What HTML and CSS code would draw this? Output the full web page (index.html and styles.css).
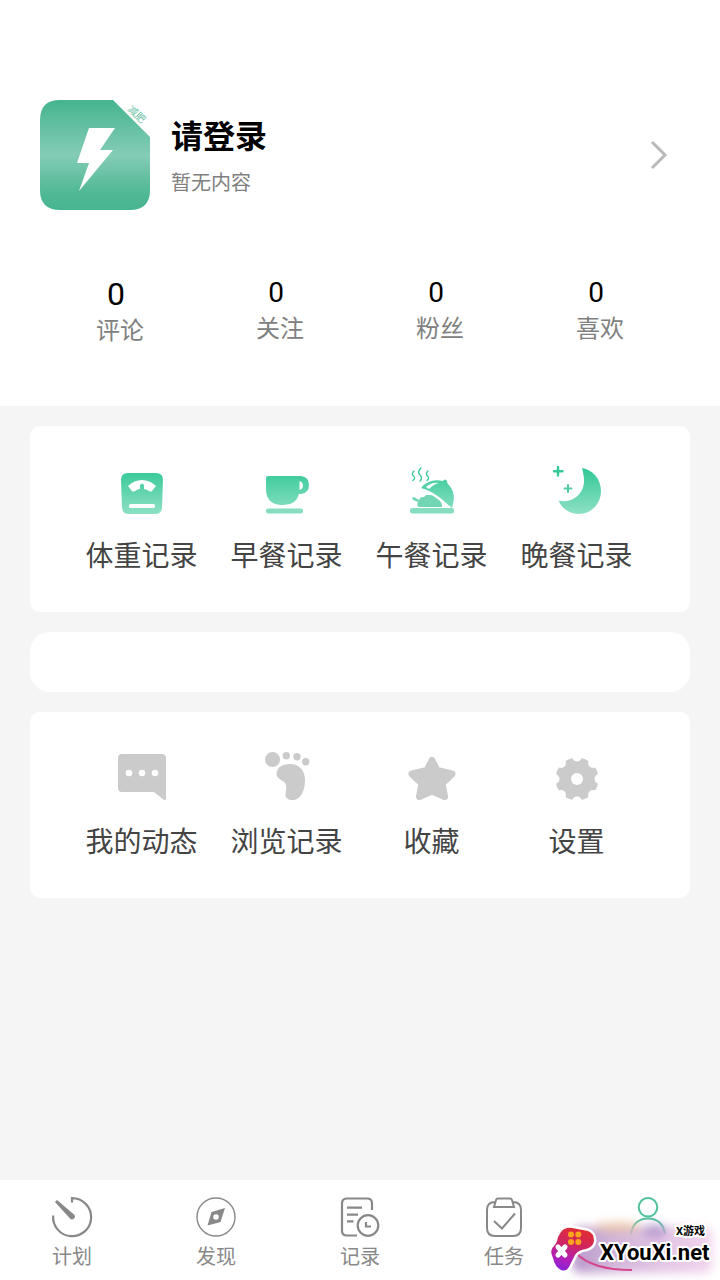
FILE: index.html
```html
<!DOCTYPE html>
<html lang="zh-CN">
<head>
<meta charset="utf-8">
<meta name="viewport" content="width=device-width, initial-scale=1">
<title>我的</title>
<link rel="stylesheet" href="styles.css">
</head>
<body>
<main class="content">
  <header class="head">
    <a class="profile" href="#login">
      <svg class="avatar" viewBox="0 0 110 110" aria-hidden="true">
        <defs>
          <linearGradient id="av" x1="0" y1="0" x2="0" y2="1">
            <stop offset="0" stop-color="#45b48f"/><stop offset=".5" stop-color="#84ccb6"/><stop offset=".85" stop-color="#4fb894"/><stop offset="1" stop-color="#48b590"/>
          </linearGradient>
        </defs>
        <path fill="url(#av)" d="M20 0H73L110 37V90Q110 110 90 110H20Q0 110 0 90V20Q0 0 20 0Z"/>
        <path fill="#fff" d="M49 28H75L60 50H73L39 91L49 63H37Z"/>
        <text class="avatar-tag" transform="translate(87 10) rotate(43)">减肥</text>
      </svg>
      <span class="who"><span class="name">请登录</span><span class="bio">暂无内容</span></span>
      <svg class="chevron" viewBox="0 0 20 30" aria-hidden="true"><path d="M3 2L16 15L3 28"/></svg>
    </a>
    <div class="stats">
      <a class="stat stat-main" href="#comments"><span class="num">0</span><span class="cap">评论</span></a>
      <a class="stat" href="#following"><span class="num">0</span><span class="cap">关注</span></a>
      <a class="stat" href="#fans"><span class="num">0</span><span class="cap">粉丝</span></a>
      <a class="stat" href="#likes"><span class="num">0</span><span class="cap">喜欢</span></a>
    </div>
  </header>

  <section class="card green">
    <a class="item" href="#weight">
      <svg class="icon" viewBox="0 0 60 60" aria-hidden="true">
        <defs>
          <linearGradient id="g" gradientUnits="userSpaceOnUse" x1="0" y1="8" x2="0" y2="52">
            <stop offset="0" stop-color="#35c997"/><stop offset="1" stop-color="#8ee0c5"/>
          </linearGradient>
        </defs>
        <path fill="url(#g)" d="M16 11H44Q51 11 51 18L50 45Q50 52 43 52H17Q10 52 10 45L9 18Q9 11 16 11Z"/>
        <path fill="#fff" d="M16 24Q22 18 30 18T44 24L40 29Q39 30 37 29Q34 27 32 27V23Q30 20 28 23V27Q26 27 23 29Q21 30 20 29Z"/>
        <rect fill="#fff" x="17" y="42" width="26" height="4" rx="1.5"/>
      </svg>
      <span>体重记录</span>
    </a>
    <a class="item" href="#breakfast">
      <svg class="icon" viewBox="0 0 60 60" aria-hidden="true">
        <path fill="url(#g)" fill-rule="evenodd" d="M11 14H44Q52 15 52 23T44 32H42Q39 43 27 43H24Q9 42 9 27V16Q9 14 11 14ZM42.500 19V28Q46 27 46 23.500T42.500 19Z"/>
        <rect fill="#86ddc1" x="9" y="46.500" width="37" height="5" rx="2"/>
      </svg>
      <span>早餐记录</span>
    </a>
    <a class="item" href="#lunch">
      <svg class="icon" viewBox="0 0 60 60" aria-hidden="true">
        <g fill="none" stroke="#35c997" stroke-width="1.300" stroke-linecap="round">
          <path d="M12 9Q9 12 11.500 14T11 18.500M19 6Q15 10 18 13T18 19M26 9Q23 12 25.500 14T25 18.500"/>
        </g>
        <path fill="url(#g)" fill-rule="evenodd" d="M19 26Q27 16 41 19Q43 16 45 19Q45 21 46 22Q55 31 50 46Q46 43 43 40Q31 29 19 26ZM24 25L27 27Q32 22 37 21Q30 20 24 25Z"/>
        <path fill="#72d6b5" d="M10 36L12 35L17 38L19 35Q22 36 24 33Q29 32 33 35Q35 37 37 38Q40 40 40 45H17Q14 43 16 40L11 38Z"/>
        <rect fill="#86ddc1" x="8" y="46" width="44" height="5.500" rx="2.500"/>
      </svg>
      <span>午餐记录</span>
    </a>
    <a class="item" href="#dinner">
      <svg class="icon" viewBox="0 0 60 60" aria-hidden="true">
        <path fill="url(#g)" d="M35 6C46 8 54 17 54 29C54 42 44 52 32 52C23 52 15 47 11.500 38.500C22 42 37 34 37 19C37 14 36 10 35 6Z"/>
        <path fill="none" stroke="#35c997" stroke-width="2.400" stroke-linecap="round" d="M11 5V13.500M7 9.200H15.500"/>
        <path fill="none" stroke="#50cda3" stroke-width="2" stroke-linecap="round" d="M21 23V30M17.500 26.500H24.500"/>
      </svg>
      <span>晚餐记录</span>
    </a>
  </section>

  <div class="strip"></div>

  <section class="card gray">
    <a class="item" href="#posts">
      <svg class="icon" viewBox="0 0 60 60" aria-hidden="true">
        <path d="M10 6H50Q54 6 54 10V51Q54 52 52 52L42 44H10Q6 44 6 40V10Q6 6 10 6Z"/>
        <g fill="#fff"><circle cx="17" cy="25" r="3.300"/><circle cx="30" cy="25" r="3.300"/><circle cx="43" cy="25" r="3.300"/></g>
      </svg>
      <span>我的动态</span>
    </a>
    <a class="item" href="#history">
      <svg class="icon" viewBox="0 0 60 60" aria-hidden="true">
        <circle cx="15.500" cy="11.500" r="7.500"/><circle cx="29.300" cy="7.700" r="3.700"/><circle cx="40" cy="8.700" r="3.700"/><circle cx="48.700" cy="13.700" r="3.700"/>
        <path d="M19.500 25C20 19 26 16 33 16C42 16 48 22 48 32C48 44 43 52 36 52C31 52 28 50 28.500 46C29 42 30 38 28 35C26 32 19 31 19.500 25Z"/>
      </svg>
      <span>浏览记录</span>
    </a>
    <a class="item" href="#favorites">
      <svg class="icon" viewBox="0 0 60 60" aria-hidden="true">
        <path stroke="#cbcbcb" stroke-width="7" stroke-linejoin="round" d="M30 12.500L35 22.500L50 26L40 35.500L42.500 48.500L30 43L17.500 48.500L20 35.500L10 26L25 22.500Z"/>
      </svg>
      <span>收藏</span>
    </a>
    <a class="item" href="#settings">
      <svg class="icon" viewBox="0 0 60 60" aria-hidden="true">
        <circle cx="30" cy="31" r="21.500"/>
        <g fill="#fff">
          <circle cx="30" cy="31" r="6"/>
          <circle cx="30" cy="8.500" r="5"/><circle cx="46" cy="15" r="5"/><circle cx="52.500" cy="31" r="5"/><circle cx="46" cy="47" r="5"/>
          <circle cx="30" cy="53.500" r="5"/><circle cx="14" cy="47" r="5"/><circle cx="7.500" cy="31" r="5"/><circle cx="14" cy="15" r="5"/>
        </g>
      </svg>
      <span>设置</span>
    </a>
  </section>
</main>

<nav class="tabs">
  <a class="tab" href="#plan">
    <svg viewBox="0 0 44 44" aria-hidden="true"><path stroke-width="2.200" d="M22 7.500V3.200A19 19 0 1 1 3.200 20.500"/><path class="solid" d="M5 7L7 5L24 19.500A2.800 2.800 0 0 1 20 23.500Z"/></svg>
    <span>计划</span>
  </a>
  <a class="tab" href="#discover">
    <svg viewBox="0 0 44 44" aria-hidden="true"><circle cx="22" cy="22" r="19" stroke-width="1.400"/><path class="solid" fill-rule="evenodd" d="M31 13L26.500 27L13.500 30.500L17.500 17ZM22 19.200A2.800 2.800 0 1 0 22 24.800A2.800 2.800 0 1 0 22 19.200Z"/></svg>
    <span>发现</span>
  </a>
  <a class="tab" href="#record">
    <svg viewBox="0 0 44 44" aria-hidden="true"><path stroke-width="2.200" d="M34 15V8Q34 3.500 29 3.500H9Q4 3.500 4 8.500V36Q4 40.500 9 40.500H19M9 12.700H24M9 19.700H20M9 26.300H15.500M28 27V31.500H33"/><circle cx="30" cy="30.500" r="10.300" stroke-width="2.200"/></svg>
    <span>记录</span>
  </a>
  <a class="tab" href="#tasks">
    <svg viewBox="0 0 44 44" aria-hidden="true"><path stroke-width="2" d="M13 7Q5 7 5 15V33Q5 41 13 41H31Q39 41 39 33V15Q39 7 31 7M12 12L14 5Q14.500 3.500 16 3.500H28Q29.500 3.500 30 5L32 12ZM12 26L20 33.500L33 18.500"/></svg>
    <span>任务</span>
  </a>
  <a class="tab active" href="#me" aria-label="我的">
    <svg viewBox="0 0 44 44" aria-hidden="true"><circle cx="22" cy="12.300" r="9.300" stroke-width="2"/><path stroke-width="2" d="M5 39C6 29 13 23.500 22 23.500S38 29 39 39"/></svg>
  </a>
  <svg class="mark" viewBox="0 0 180 70" role="img" aria-label="X游戏 XYouXi.net">
    <defs>
      <filter id="soft" x="-20%" y="-40%" width="140%" height="180%"><feGaussianBlur stdDeviation="5"/></filter>
      <linearGradient id="haze" x1="0" y1="0" x2="1" y2="0">
        <stop offset="0" stop-color="#a77fc0"/><stop offset=".3" stop-color="#c6a2cf"/><stop offset=".6" stop-color="#d9b4dc"/><stop offset="1" stop-color="#efc9ea"/>
      </linearGradient>
      <linearGradient id="pad" x1=".6" y1="0" x2=".3" y2="1">
        <stop offset="0" stop-color="#e12d32"/><stop offset=".4" stop-color="#cf2462"/><stop offset=".75" stop-color="#b21fb8"/><stop offset="1" stop-color="#8b22d8"/>
      </linearGradient>
    </defs>
    <g filter="url(#soft)">
      <rect x="32" y="17" width="140" height="46" rx="8" fill="url(#haze)" opacity=".8"/>
      <ellipse cx="78" cy="17" rx="24" ry="5" fill="#eac19c" opacity=".8"/>
      <ellipse cx="115" cy="21" rx="12" ry="7" fill="#a78cc8" opacity=".7"/>
    </g>
    <path class="swoosh" d="M36 43Q52 60 92 60"/>
    <path fill="url(#pad)" stroke="#fff" stroke-width="5" stroke-linejoin="round" paint-order="stroke" d="M21 22Q25 17 32 18L48 21Q54 23 54 31Q53 37 46 39Q38 40 35 45L29 57Q26 62 21 60Q15 57 13 48Q9 40 14 36Q17 33 18 27Z"/>
    <g fill="#fba51c"><circle cx="31" cy="24.500" r="3"/><circle cx="38.300" cy="24.500" r="3"/><circle cx="31" cy="32" r="3"/><circle cx="38.300" cy="32" r="3"/></g>
    <path fill="none" stroke="#fff" stroke-width="5" stroke-linecap="round" d="M18 37L25 45M25 37L18 45"/>
    <text class="mark-small" x="136" y="25">X游戏</text>
    <text class="mark-big" x="60" y="50">XYouXi.net</text>
  </svg>
</nav>
</body>
</html>
```
FILE: styles.css
```css
* { box-sizing: border-box; }
body {
  margin: 0;
  min-height: 100vh;
  display: flex;
  flex-direction: column;
  background: #f5f5f5;
  font-family: Roboto, "Noto Sans CJK SC", sans-serif;
}
a { color: inherit; text-decoration: none; }
svg { display: block; }
.content { flex: 1; }

.head { background: #fff; padding: 100px 40px 57px; }
.profile { display: flex; align-items: center; }
.avatar { width: 110px; height: 110px; flex: none; }
.avatar-tag { font-size: 10px; fill: #6fc2a6; }
.who { flex: 1; display: flex; flex-direction: column; padding: 4px 0 0 21px; }
.name { font-size: 32px; line-height: 52px; font-weight: 700; color: #000; }
.bio { font-size: 20px; line-height: 40px; color: #808080; }
.chevron { width: 20px; height: 30px; margin-right: 11px; fill: none; stroke: #b9b9b9; stroke-width: 3px; }

.stats { display: grid; grid-template-columns: repeat(4, 1fr); padding-top: 65px; }
.stat { display: flex; flex-direction: column; align-items: center; }
.num { font-size: 28px; line-height: 36px; color: #000; padding-right: 8px; }
.stat-main .num { font-size: 32px; line-height: 38px; }
.cap { font-size: 24px; line-height: 36px; color: #808080; }

.card {
  display: grid;
  grid-template-columns: repeat(4, 1fr);
  margin: 20px 30px;
  padding: 36px 41px 34px 39px;
  border-radius: 10px;
  background: #fff;
}
.item { display: flex; flex-direction: column; align-items: center; font-size: 28px; line-height: 42px; color: #444; }
.icon { width: 60px; height: 60px; margin-bottom: 14px; }
.gray .icon { fill: #cbcbcb; }
.strip { height: 60px; margin: 0 30px; border-radius: 20px; background: #fff; }

.tabs {
  position: sticky;
  bottom: 0;
  display: grid;
  grid-template-columns: repeat(5, 1fr);
  padding: 15px 0 7px;
  background: #fff;
}
.tab { display: flex; flex-direction: column; align-items: center; gap: 2px; font-size: 20px; line-height: 32px; color: #888; }
.tab svg { width: 44px; height: 44px; fill: none; stroke: currentColor; }
.tab .solid { fill: currentColor; stroke: none; }
.tab.active { color: #4fc29b; }

.mark { position: absolute; right: 0; bottom: 0; width: 180px; height: 70px; pointer-events: none; }
.mark text { font-family: Roboto, "Noto Sans CJK SC", sans-serif; font-weight: 700; fill: #000; stroke: #fff; stroke-width: 4px; stroke-linejoin: round; paint-order: stroke; }
.mark .mark-big { font-size: 22px; }
.mark .mark-small { font-size: 11px; }
.swoosh { fill: none; stroke: #d4478f; stroke-width: 2px; }
```
